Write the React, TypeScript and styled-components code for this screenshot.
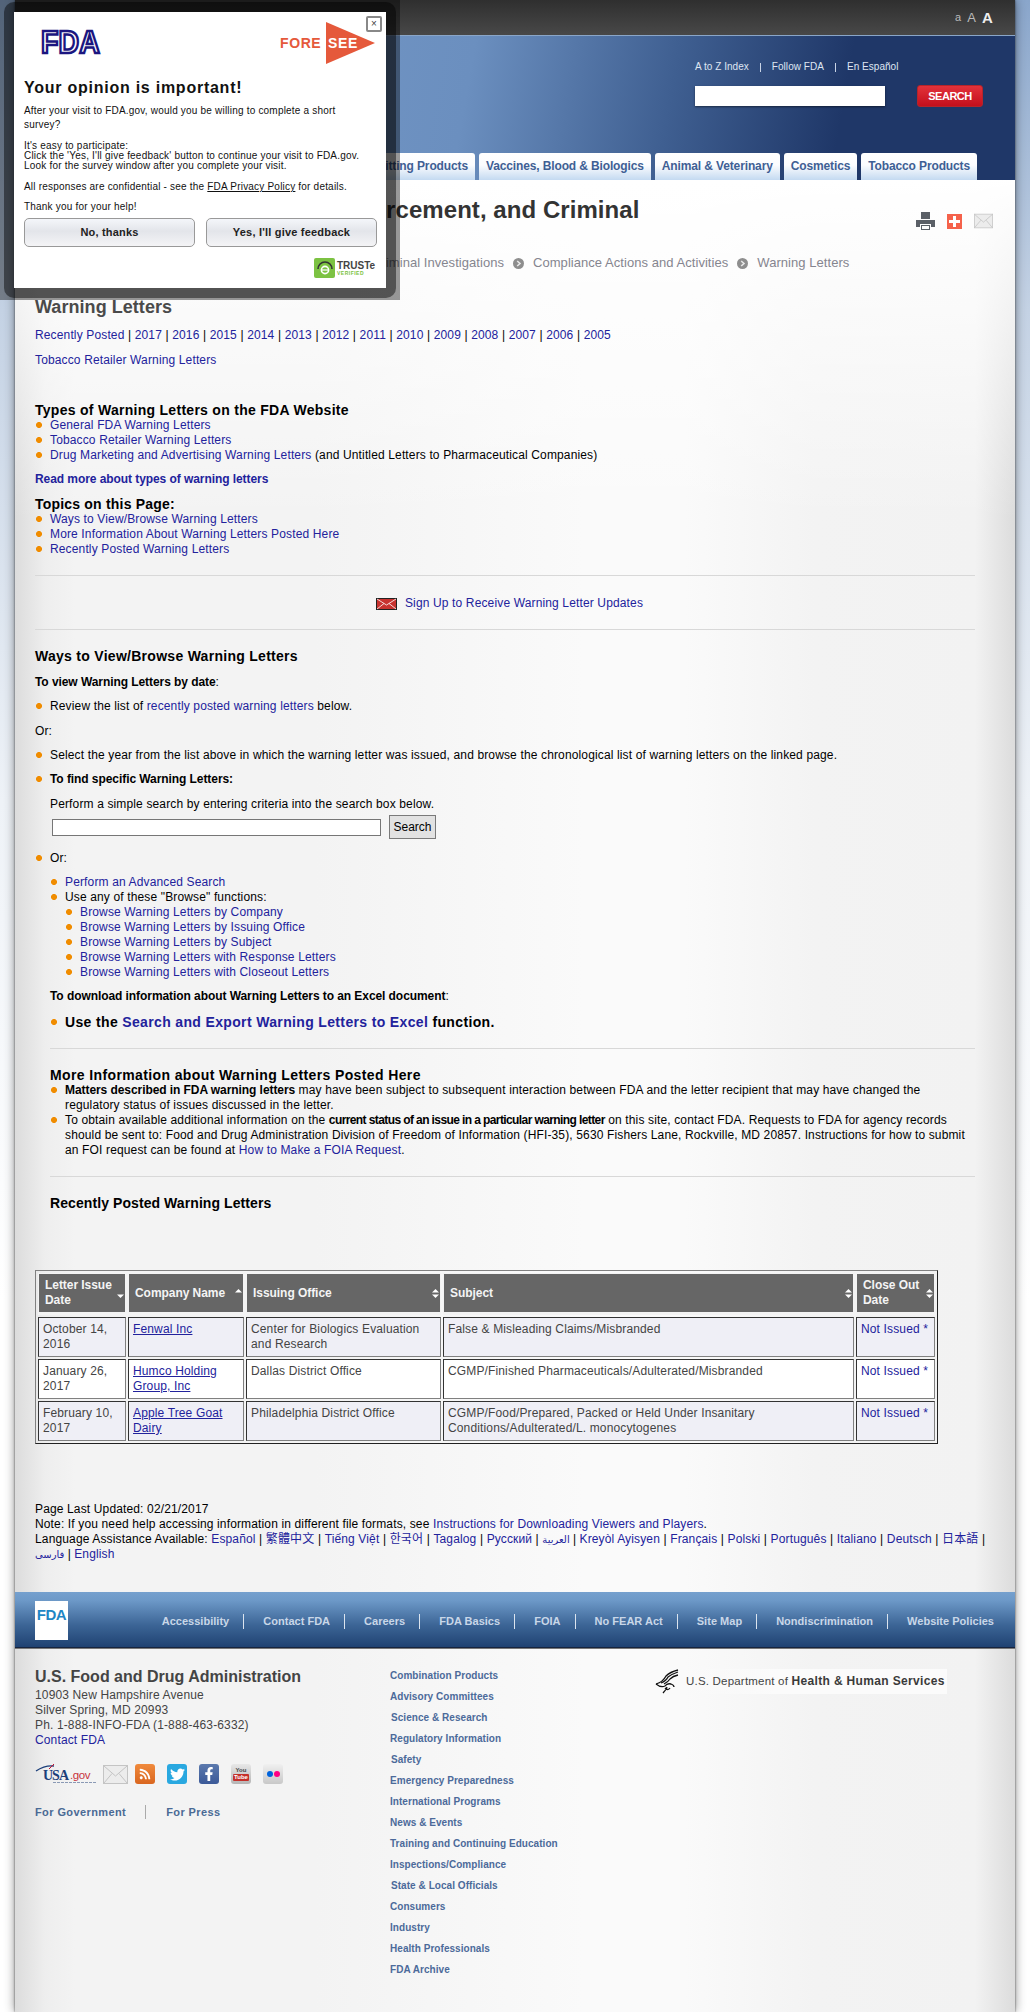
import styled, { createGlobalStyle } from 'styled-components';
import { FaTwitter, FaFacebookF, FaRss } from 'react-icons/fa';

const Global = createGlobalStyle`
  html, body { margin: 0; padding: 0; }
  body {
    font-family: "Liberation Sans", "Noto Sans CJK SC", "DejaVu Sans", sans-serif;
    font-size: 12px;
    line-height: 15px;
    letter-spacing: 0.14px;
    color: #000;
    background: linear-gradient(to bottom, #8aa6cb 0, #c4d2e4 310px, #eef2f7 800px, #fff 1300px);
    background-repeat: no-repeat;
  }
  a { color: #22229c; text-decoration: none; }
  b { letter-spacing: -0.07px; }
`;

const Panel = styled.div`
  position: relative;
  width: 1000px;
  height: 2012px;
  margin-left: 15px;
  overflow: hidden;
  box-shadow: 0 0 10px rgba(0, 0, 0, 0.45), 0 0 2px rgba(0, 0, 0, 0.6);
  background:
    linear-gradient(to bottom, #fff 180px, rgba(255, 255, 255, 0) 520px),
    linear-gradient(to right, #dcdcdc 0, #eeeeee 30px, #f3f3f3 60px, #f3f3f3 300px, #fafafa 570px, #fafafa 670px, #f3f3f3 800px, #f2f2f2 960px, #dcdcdc 1000px);
`;

const PanelClip = styled.div`
  display: flex;
  flex-direction: column;
`;

const TopBar = styled.div`
  height: 35px;
  border-bottom: 1px solid #8aa6c8;
  background: linear-gradient(to bottom, #2f2f2f, #484848);
  display: flex;
  justify-content: flex-end;
  align-items: center;
  gap: 6px;
  padding-right: 22px;
  color: #bbb;
  font-weight: normal;
`;

const SizeA = styled.span<{ $s: number; $b?: boolean }>`
  font-size: ${(p) => p.$s}px;
  font-weight: ${(p) => (p.$b ? 700 : 400)};
  color: ${(p) => (p.$b ? '#eee' : '#bbb')};
`;

const Header = styled.div`
  height: 144px;
  box-sizing: border-box;
  background: linear-gradient(100deg, #7a9dca 0, #6b8fbf 45%, #3f5f91 65%, #1f3768 82%, #1f3768 100%);
  display: flex;
  flex-direction: column;
  justify-content: space-between;
`;

const Utility = styled.div`
  align-self: flex-end;
  width: 320px;
  padding-top: 24px;
`;

const UtilLinks = styled.div`
  display: flex;
  align-items: center;
  gap: 11px;
  font-size: 10px;
  line-height: 14px;
  letter-spacing: 0.04px;
  color: #dfe6f2;
`;

const UtilSep = styled.span`
  width: 1px;
  height: 9px;
  background: #c9d4e6;
`;

const SearchRow = styled.div`
  display: flex;
  align-items: center;
  margin-top: 11px;
`;

const SearchBox = styled.div`
  width: 190px;
  height: 20px;
  background: #fff;
  box-shadow: 0 1px 2px rgba(0, 0, 0, 0.5);
`;

const SearchBtn = styled.div`
  margin-left: 32px;
  width: 66px;
  height: 22px;
  border-radius: 3px;
  background: linear-gradient(to bottom, #e2323a, #c40f1c);
  border: 1px solid #b5242a;
  box-sizing: border-box;
  color: #fff;
  font-weight: 700;
  font-size: 11px;
  line-height: 20px;
  letter-spacing: -0.5px;
  text-align: center;
`;

const Tabs = styled.div`
  display: flex;
  justify-content: flex-end;
  gap: 4px;
  padding-right: 38px;
`;

const Tab = styled.div`
  height: 27px;
  box-sizing: border-box;
  padding: 0 7px;
  border-radius: 3px 3px 0 0;
  background: linear-gradient(to bottom, #fff, #fbfcfe 45%, #c4daf1);
  color: #3f5f94;
  font-weight: 700;
  font-size: 12px;
  line-height: 27px;
  letter-spacing: -0.13px;
  white-space: nowrap;
`;

const TitleRow = styled.div`
  display: flex;
  justify-content: space-between;
  padding: 15px 22px 0 20px;
`;

const Title = styled.h1`
  margin: 0;
  width: 700px;
  font-size: 24px;
  line-height: 30px;
  font-weight: 700;
  letter-spacing: 0.06px;
  color: #333;
`;

const PageTools = styled.div`
  display: flex;
  align-items: center;
  gap: 12px;
  height: 18px;
  margin-top: 17px;
`;

const Crumbs = styled.div`
  display: flex;
  align-items: center;
  gap: 9px;
  padding-left: 36px;
  height: 16px;
  font-size: 13px;
  line-height: 16px;
  letter-spacing: 0.05px;
  color: #85858f;
  white-space: nowrap;
`;

const Content = styled.div`
  padding: 0 40px 0 20px;
`;

const PageHeading = styled.h2`
  margin: 25px 0 0;
  font-size: 18px;
  line-height: 22px;
  font-weight: 700;
  letter-spacing: 0.05px;
  color: #4a4a4a;
`;

const Para = styled.p<{ $mt?: number; $in?: number; $b?: boolean }>`
  margin: ${(p) => p.$mt ?? 9}px 0 0 ${(p) => p.$in ?? 0}px;
  font-weight: ${(p) => (p.$b ? 700 : 400)};
  ${(p) => p.$b && 'letter-spacing: -0.07px;'}
`;

const SubHead = styled.h3<{ $mt?: number; $in?: number; $ls?: number }>`
  margin: ${(p) => p.$mt ?? 9}px 0 0 ${(p) => p.$in ?? 0}px;
  font-size: 14px;
  line-height: 16px;
  font-weight: 700;
  letter-spacing: ${(p) => p.$ls ?? 0.28}px;
  color: #000;
`;

const BulletList = styled.ul<{ $mt?: number; $in?: number }>`
  list-style: none;
  margin: ${(p) => p.$mt ?? 0}px 0 0 ${(p) => p.$in ?? 0}px;
  padding: 0;
`;

const Bullet = styled.li<{ $mt?: number; $big?: boolean }>`
  margin-top: ${(p) => p.$mt ?? 0}px;
  padding-left: 15px;
  background: radial-gradient(circle at 3px 3px, #f08c00 2.6px, rgba(240, 140, 0, 0) 3.4px) no-repeat 1px ${(p) => (p.$big ? 5 : 4)}px;
  background-size: 7px 7px;
  ${(p) => p.$big && 'font-size: 14px; line-height: 16px; font-weight: 700; letter-spacing: 0.35px;'}
`;

const TightBold = styled.b`
  letter-spacing: -0.6px;
`;

const Rule = styled.hr<{ $in?: number }>`
  border: 0;
  height: 1px;
  background: #d8d8d8;
  margin: 18px 0 0 ${(p) => p.$in ?? 0}px;
`;

const SignUp = styled.div`
  display: flex;
  justify-content: center;
  align-items: center;
  gap: 8px;
  margin-top: 20px;
  padding-left: 9px;
`;

const SearchForm = styled.form`
  display: flex;
  align-items: center;
  gap: 8px;
  margin: 3px 0 0 2px;
`;

const TextBox = styled.div`
  width: 327px;
  height: 15px;
  background: #fff;
  border: 1px solid #767676;
`;

const FormBtn = styled.button`
  width: 47px;
  height: 24px;
  padding: 0;
  background: #e2e2e2;
  border: 1px solid #7a7a7a;
  font: inherit;
  color: #000;
`;

const Table = styled.table`
  margin-top: 59px;
  width: 903px;
  table-layout: fixed;
  border-collapse: separate;
  border-spacing: 2px;
  border: 1px solid;
  border-color: #808080 #222 #222 #808080;
  color: #444;
`;

const Th = styled.th<{ $w: number }>`
  width: ${(p) => p.$w - 2}px;
  padding: 0;
  background: #666;
  border: 1px solid #f3f3f3;
  border-bottom-width: 3px;
  color: #f4f4f4;
  font-weight: 700;
  letter-spacing: -0.05px;
  text-align: left;
`;

const HeadInner = styled.div`
  display: flex;
  justify-content: space-between;
  align-items: center;
  height: 38px;
  padding: 0 1px 0 6px;
`;

const Td = styled.td<{ $even?: boolean }>`
  height: 30px;
  padding: 4px;
  vertical-align: top;
  background: ${(p) => (p.$even ? '#fff' : '#efeff6')};
  border: 1px solid;
  border-color: #333 #808080 #808080 #333;
`;

const TableLink = styled.a`
  text-decoration: underline;
`;

const Updated = styled.div`
  margin-top: 58px;
  width: 965px;
`;

const ArabicText = styled.a`
  font-size: 10px;
`;

const FootBand = styled.div`
  margin-top: 30px;
  height: 56px;
  border-bottom: 1px solid #16243f;
  box-shadow: 0 1px 0 #777;
  background: linear-gradient(to bottom, #75a0ce 0, #6d99c8 15%, #3c6596 60%, #1f4272 100%);
  display: flex;
  justify-content: space-between;
  padding: 9px 21px 0 20px;
  box-sizing: border-box;
`;

const FootLogo = styled.div`
  width: 33px;
  height: 39px;
  background: #fff;
  display: flex;
  justify-content: center;
  color: #1f86c5;
  font-weight: 700;
  font-size: 15px;
  line-height: 28px;
  letter-spacing: -0.5px;
`;

const FootNav = styled.div`
  display: flex;
  align-items: center;
  height: 15px;
  margin-top: 13px;
`;

const FootNavLink = styled.a`
  padding: 0 14px 0 19px;
  border-right: 1px solid #dbe4ef;
  color: #c9d7e8;
  font-size: 11px;
  font-weight: 700;
  line-height: 15px;
  letter-spacing: 0.02px;
  white-space: nowrap;
  &:last-child { border-right: 0; padding-right: 0; }
`;

const FootBody = styled.div`
  display: flex;
  padding: 19px 0 0 20px;
`;

const FootLeft = styled.div`
  width: 355px;
  color: #444;
`;

const OrgName = styled.div`
  font-size: 16px;
  line-height: 20px;
  font-weight: 700;
  letter-spacing: 0;
  color: #444;
  margin-bottom: 1px;
`;

const Socials = styled.div`
  display: flex;
  align-items: center;
  height: 22px;
  margin-top: 15px;
`;

const SocialBox = styled.div<{ $bg: string; $ml: number }>`
  width: 20px;
  height: 20px;
  margin-left: ${(p) => p.$ml}px;
  border-radius: 3px;
  background: ${(p) => p.$bg};
  display: flex;
  flex-direction: column;
  align-items: center;
  justify-content: center;
  color: #fff;
  font-size: 14px;
`;

const TubeTop = styled.span`
  font-size: 6px;
  line-height: 7px;
  font-weight: 700;
  letter-spacing: 0;
  color: #444;
`;

const TubeLow = styled.span`
  font-size: 6px;
  line-height: 7px;
  font-weight: 700;
  letter-spacing: 0;
  color: #fff;
  background: #c4302b;
  border-radius: 1px;
  padding: 0 1px;
`;

const FlickrDot = styled.span<{ $c: string }>`
  width: 6px;
  height: 6px;
  border-radius: 50%;
  background: ${(p) => p.$c};
`;

const FlickrRow = styled.div`
  display: flex;
  gap: 1px;
`;

const ForLinks = styled.div`
  display: flex;
  align-items: center;
  margin-top: 20px;
`;

const ForLink = styled.a`
  color: #4a6a95;
  font-size: 11px;
  line-height: 14px;
  font-weight: 700;
  letter-spacing: 0.4px;
`;

const ForSep = styled.span`
  width: 1px;
  height: 14px;
  background: #aaa;
  margin: 0 20px 0 19px;
`;

const FootMid = styled.div`
  width: 265px;
  margin-top: 1px;
`;

const MidLink = styled.div<{ $off?: boolean }>`
  height: 21px;
  padding-left: ${(p) => (p.$off ? 1 : 0)}px;
  color: #4c6a9a;
  font-size: 10px;
  line-height: 16px;
  font-weight: 700;
  letter-spacing: 0.05px;
`;

const Hhs = styled.div`
  height: 25px;
  width: 292px;
  display: flex;
  align-items: center;
  gap: 7px;
  margin-top: 2px;
  background: linear-gradient(to right, rgba(255, 255, 255, 0) 30px, #fbfbfb 120px);
  font-size: 11.5px;
  letter-spacing: 0.2px;
  color: #444;
  white-space: nowrap;
`;

const HhsBold = styled.b`
  font-size: 12px;
  letter-spacing: 0.35px;
  color: #3a3a3a;
`;

const Overlay = styled.div`
  position: absolute;
  top: 0;
  left: 0;
  width: 400px;
  height: 300px;
  background: rgba(0, 0, 0, 0.4);
`;

const ModalFrame = styled.div`
  position: absolute;
  top: 2px;
  left: 4px;
  width: 392px;
  height: 296px;
  box-sizing: border-box;
  padding: 10px;
  border-radius: 10px;
  background: rgba(0, 0, 0, 0.45);
`;

const ModalBody = styled.div`
  position: relative;
  height: 276px;
  box-sizing: border-box;
  padding: 0 10px;
  background: #fff;
  font-size: 10px;
  line-height: 11px;
  letter-spacing: 0.2px;
  color: #111;
`;

const ModalLogos = styled.div`
  display: flex;
  justify-content: space-between;
  align-items: flex-start;
  box-sizing: border-box;
  height: 67px;
  padding: 10px 1px 0 16px;
`;

const CloseBtn = styled.div`
  position: absolute;
  top: 4px;
  right: 4px;
  width: 12px;
  height: 12px;
  border: 2px solid #888;
  border-radius: 2px;
  background: #fff;
  color: #444;
  font-size: 10px;
  line-height: 11px;
  letter-spacing: 0;
  text-align: center;
`;

const ModalTitle = styled.div`
  margin: 0;
  height: 18px;
  font-size: 16px;
  line-height: 18px;
  font-weight: 700;
  letter-spacing: 0.75px;
  color: #111;
`;

const ModalText = styled.div<{ $mt: number; $lh?: number; $w?: number }>`
  margin-top: ${(p) => p.$mt}px;
  line-height: ${(p) => p.$lh ?? 10}px;
  ${(p) => p.$w && `width: ${p.$w}px;`}
`;

const ModalBtns = styled.div`
  display: flex;
  justify-content: space-between;
  margin: 6px -1px 0 0;
`;

const ModalBtn = styled.div`
  width: 171px;
  height: 29px;
  box-sizing: border-box;
  border: 1px solid #999;
  border-radius: 5px;
  background: linear-gradient(to bottom, #f4f6fa, #e3e5ea 45%, #f4f4f6);
  text-align: center;
  font-size: 11px;
  font-weight: 700;
  line-height: 26px;
  letter-spacing: 0.2px;
  color: #222;
`;

const Truste = styled.div`
  display: flex;
  justify-content: flex-end;
  align-items: center;
  gap: 2px;
  margin-top: 11px;
`;

const TrusteBadge = styled.div`
  width: 21px;
  height: 20px;
  background: #7cc242;
  border-radius: 2px;
  display: flex;
  align-items: center;
  justify-content: center;
`;

const TrusteText = styled.div`
  font-size: 10px;
  line-height: 9px;
  font-weight: 700;
  letter-spacing: 0;
  color: #444;
  width: 39px;
`;

const TrusteSub = styled.div`
  font-size: 5px;
  line-height: 6px;
  color: #7cc242;
  letter-spacing: 0.5px;
`;

const tabs = [
  'Home', 'Food', 'Drugs', 'Medical Devices', 'Radiation-Emitting Products',
  'Vaccines, Blood & Biologics', 'Animal & Veterinary', 'Cosmetics', 'Tobacco Products',
];
const years = ['2017', '2016', '2015', '2014', '2013', '2012', '2011', '2010', '2009', '2008', '2007', '2006', '2005'];
const footNav = ['Accessibility', 'Contact FDA', 'Careers', 'FDA Basics', 'FOIA', 'No FEAR Act', 'Site Map', 'Nondiscrimination', 'Website Policies'];
const midLinks: [string, boolean?][] = [
  ['Combination Products'], ['Advisory Committees'], ['Science & Research', true], ['Regulatory Information'],
  ['Safety', true], ['Emergency Preparedness'], ['International Programs'], ['News & Events'],
  ['Training and Continuing Education'], ['Inspections/Compliance'], ['State & Local Officials', true],
  ['Consumers'], ['Industry'], ['Health Professionals'], ['FDA Archive'],
];
const languagesA = ['Español', '繁體中文', 'Tiếng Việt', '한국어', 'Tagalog', 'Русский'];
const languagesB = ['Kreyòl Ayisyen', 'Français', 'Polski', 'Português', 'Italiano', 'Deutsch', '日本語'];
const rows = [
  { date: 'October 14, 2016', company: 'Fenwal Inc', office: 'Center for Biologics Evaluation and Research', subject: 'False & Misleading Claims/Misbranded' },
  { date: 'January 26, 2017', company: 'Humco Holding Group, Inc', office: 'Dallas District Office', subject: 'CGMP/Finished Pharmaceuticals/Adulterated/Misbranded' },
  { date: 'February 10, 2017', company: 'Apple Tree Goat Dairy', office: 'Philadelphia District Office', subject: 'CGMP/Food/Prepared, Packed or Held Under Insanitary Conditions/Adulterated/L. monocytogenes' },
];

function CrumbDot() {
  return (
    <svg width="11" height="11" viewBox="0 0 11 11" style={{ flexShrink: 0 }}>
      <circle cx="5.5" cy="5.5" r="5.5" fill="#8e8e8e" />
      <path d="M4.2 3 L7 5.5 L4.2 8" fill="none" stroke="#e8e8e8" strokeWidth="1.6" />
    </svg>
  );
}

function Envelope({ w, h }: { w: number; h: number }) {
  return (
    <svg width={w} height={h} viewBox="0 0 25 19">
      <rect x="0.5" y="0.5" width="24" height="18" fill="#ececec" stroke="#c4c4c4" />
      <path d="M1 1 L12.5 11 L24 1 M1 18 L9 8.5 M24 18 L16 8.5" fill="none" stroke="#c4c4c4" />
    </svg>
  );
}

function SortArrow({ dir }: { dir: 'both' | 'up' | 'down' }) {
  return (
    <svg width="7" height="9" viewBox="0 0 7 9" style={{ flexShrink: 0 }}>
      {dir !== 'down' && <path d="M3.5 0 L7 3.6 L0 3.6 Z" fill="#fff" />}
      {dir !== 'up' && <path d="M0 5.4 L7 5.4 L3.5 9 Z" fill="#fff" />}
    </svg>
  );
}

function FdaMark() {
  return (
    <svg width="66" height="42" viewBox="0 0 66 42">
      <text x="1" y="31" fontFamily="Liberation Sans" fontWeight="700" fontSize="32" textLength="59" lengthAdjust="spacingAndGlyphs" fill="#fff" stroke="#1b1680" strokeWidth="2.6">FDA</text>
    </svg>
  );
}

function ForeseeMark() {
  return (
    <svg width="95" height="42" viewBox="0 0 95 42">
      <polygon points="46,0 95,21 46,42" fill="#e5593b" />
      <text x="0" y="26" fontFamily="Liberation Sans" fontWeight="700" fontSize="14" letterSpacing="0.6" fill="#e5593b">FORE</text>
      <text x="48" y="26" fontFamily="Liberation Sans" fontWeight="700" fontSize="14" letterSpacing="0.6" fill="#fff">SEE</text>
    </svg>
  );
}

function UsaGov() {
  return (
    <svg width="68" height="20" viewBox="0 0 68 20">
      <path d="M1 7 Q10 1 19 2" fill="none" stroke="#1c3f7a" strokeWidth="1.3" />
      <path d="M14 5 L19 0" stroke="#c8102e" strokeWidth="1" />
      <text x="8" y="16" fontFamily="Liberation Serif" fontWeight="700" fontSize="14" letterSpacing="-1" fill="#1c3f7a">USA</text>
      <text x="35" y="15" fontFamily="Liberation Sans" fontSize="11.5" letterSpacing="-0.4" fill="#c8323c">.gov</text>
      <path d="M18 18.5 H61" stroke="#8b9ab5" strokeWidth="1" strokeDasharray="3 1" />
    </svg>
  );
}

function HhsEagle() {
  return (
    <svg width="24" height="25" viewBox="0 0 24 25" style={{ flexShrink: 0 }}>
      <g fill="none" stroke="#111" strokeWidth="1.3">
        <path d="M1 15 Q8 13 11 7 Q15 3 23 1" />
        <path d="M6 14 Q11 12 13 8 Q17 5 23 3" />
        <path d="M9 15 Q13 13 15 10 Q18 7 23 6" />
        <path d="M1 15 Q6 19 10 17 Q12 14 16 15 Q19 16 19 18" />
        <path d="M8 24 Q11 21 12 18 M10 19 Q13 22 15 19" />
      </g>
    </svg>
  );
}

export default function App() {
  return (
    <>
      <Global />
      <Panel>
        <PanelClip>
          <TopBar>
            <SizeA $s={11}>a</SizeA>
            <SizeA $s={13}>A</SizeA>
            <SizeA $s={15} $b>A</SizeA>
          </TopBar>
          <Header>
            <Utility>
              <UtilLinks>
                <span>A to Z Index</span><UtilSep />
                <span>Follow FDA</span><UtilSep />
                <span>En Español</span>
              </UtilLinks>
              <SearchRow>
                <SearchBox />
                <SearchBtn>SEARCH</SearchBtn>
              </SearchRow>
            </Utility>
            <Tabs>
              {tabs.map((t) => <Tab key={t}>{t}</Tab>)}
            </Tabs>
          </Header>

          <TitleRow>
            <Title>Inspections, Compliance, Enforcement, and Criminal Investigations</Title>
            <PageTools>
              <svg width="19" height="18" viewBox="0 0 19 18">
                <path d="M5 0 H14 V7 H5 Z" fill="#5a5f66" />
                <path d="M0 8 H19 V15 H15 V12 H4 V15 H0 Z" fill="#5a5f66" />
                <path d="M5 13 H14 V18 H5 Z M6 14 V17 H13 V14 Z" fill="#5a5f66" fillRule="evenodd" />
              </svg>
              <svg width="15" height="15" viewBox="0 0 15 15">
                <rect width="15" height="15" fill="#f5624b" />
                <path d="M6 2 H9 V6 H13 V9 H9 V13 H6 V9 H2 V6 H6 Z" fill="#fff" />
              </svg>
              <Envelope w={19} h={18} />
            </PageTools>
          </TitleRow>
          <Crumbs>
            <span>Home</span><CrumbDot />
            <span>Inspections, Compliance, Enforcement, and Criminal Investigations</span><CrumbDot />
            <span>Compliance Actions and Activities</span><CrumbDot />
            <span>Warning Letters</span>
          </Crumbs>

          <Content>
            <PageHeading>Warning Letters</PageHeading>
            <Para $mt={10}>
              <a>Recently Posted</a>
              {years.map((y) => <span key={y}> | <a>{y}</a></span>)}
            </Para>
            <Para $mt={10}><a>Tobacco Retailer Warning Letters</a></Para>

            <SubHead $mt={34}>Types of Warning Letters on the FDA Website</SubHead>
            <BulletList>
              <Bullet><a>General FDA Warning Letters</a></Bullet>
              <Bullet><a>Tobacco Retailer Warning Letters</a></Bullet>
              <Bullet><a>Drug Marketing and Advertising Warning Letters</a> (and Untitled Letters to Pharmaceutical Companies)</Bullet>
            </BulletList>
            <Para $b><a>Read more about types of warning letters</a></Para>
            <SubHead $ls={0.2}>Topics on this Page:</SubHead>
            <BulletList>
              <Bullet><a>Ways to View/Browse Warning Letters</a></Bullet>
              <Bullet><a>More Information About Warning Letters Posted Here</a></Bullet>
              <Bullet><a>Recently Posted Warning Letters</a></Bullet>
            </BulletList>
            <Rule />
            <SignUp>
              <svg width="21" height="12" viewBox="0 0 21 12">
                <rect x="0.5" y="0.5" width="20" height="11" fill="#c8322f" stroke="#222" />
                <path d="M1 1 L10.5 7 L20 1 M1 11 L8 5.5 M20 11 L13 5.5" fill="none" stroke="#fff" strokeWidth="0.8" />
              </svg>
              <a>Sign Up to Receive Warning Letter Updates</a>
            </SignUp>
            <Rule />

            <SubHead $mt={18}>Ways to View/Browse Warning Letters</SubHead>
            <Para $mt={11} $b>To view Warning Letters by date<span style={{ fontWeight: 400 }}>:</span></Para>
            <BulletList $mt={9}>
              <Bullet>Review the list of <a>recently posted warning letters</a> below.</Bullet>
            </BulletList>
            <Para $mt={10}>Or:</Para>
            <BulletList $mt={9}>
              <Bullet>Select the year from the list above in which the warning letter was issued, and browse the chronological list of warning letters on the linked page.</Bullet>
              <Bullet $mt={9}>
                <b>To find specific Warning Letters:</b>
                <Para $mt={10}>Perform a simple search by entering criteria into the search box below.</Para>
                <SearchForm>
                  <TextBox />
                  <FormBtn type="button">Search</FormBtn>
                </SearchForm>
              </Bullet>
              <Bullet $mt={12}>
                Or:
                <BulletList $mt={9}>
                  <Bullet><a>Perform an Advanced Search</a></Bullet>
                  <Bullet>
                    Use any of these "Browse" functions:
                    <BulletList>
                      <Bullet><a>Browse Warning Letters by Company</a></Bullet>
                      <Bullet><a>Browse Warning Letters by Issuing Office</a></Bullet>
                      <Bullet><a>Browse Warning Letters by Subject</a></Bullet>
                      <Bullet><a>Browse Warning Letters with Response Letters</a></Bullet>
                      <Bullet><a>Browse Warning Letters with Closeout Letters</a></Bullet>
                    </BulletList>
                  </Bullet>
                </BulletList>
              </Bullet>
            </BulletList>
            <Para $in={15} $b>To download information about Warning Letters to an Excel document<span style={{ fontWeight: 400 }}>:</span></Para>
            <BulletList $mt={10} $in={15}>
              <Bullet $big>Use the <a>Search and Export Warning Letters to Excel</a> function.</Bullet>
            </BulletList>
            <Rule $in={15} />

            <SubHead $mt={18} $in={15} $ls={0.38}>More Information about Warning Letters Posted Here</SubHead>
            <BulletList $in={15}>
              <Bullet><b>Matters described in FDA warning letters</b> may have been subject to subsequent interaction between FDA and the letter recipient that may have changed the regulatory status of issues discussed in the letter.</Bullet>
              <Bullet>To obtain available additional information on the <TightBold>current status of an issue in a particular warning letter</TightBold> on this site, contact FDA. Requests to FDA for agency records should be sent to: Food and Drug Administration Division of Freedom of Information (HFI-35), 5630 Fishers Lane, Rockville, MD 20857. Instructions for how to submit an FOI request can be found at <a>How to Make a FOIA Request</a>.</Bullet>
            </BulletList>
            <Rule $in={15} />
            <SubHead $mt={18} $in={15} $ls={0.08}>Recently Posted Warning Letters</SubHead>

            <Table>
              <thead>
                <tr>
                  <Th $w={88}><HeadInner>Letter Issue Date<SortArrow dir="down" /></HeadInner></Th>
                  <Th $w={116}><HeadInner>Company Name<SortArrow dir="up" /></HeadInner></Th>
                  <Th $w={195}><HeadInner>Issuing Office<SortArrow dir="both" /></HeadInner></Th>
                  <Th $w={411}><HeadInner>Subject<SortArrow dir="both" /></HeadInner></Th>
                  <Th $w={79}><HeadInner>Close Out Date<SortArrow dir="both" /></HeadInner></Th>
                </tr>
              </thead>
              <tbody>
                {rows.map((r, i) => (
                  <tr key={r.company}>
                    <Td $even={i === 1}>{r.date}</Td>
                    <Td $even={i === 1}><TableLink>{r.company}</TableLink></Td>
                    <Td $even={i === 1}>{r.office}</Td>
                    <Td $even={i === 1}>{r.subject}</Td>
                    <Td $even={i === 1}><a>Not Issued *</a></Td>
                  </tr>
                ))}
              </tbody>
            </Table>

            <Updated>
              Page Last Updated: 02/21/2017<br />
              Note: If you need help accessing information in different file formats, see <a>Instructions for Downloading Viewers and Players</a>.<br />
              Language Assistance Available:{' '}
              {languagesA.map((l) => <span key={l}><a>{l}</a> | </span>)}
              <ArabicText>العربية</ArabicText>{' | '}
              {languagesB.map((l) => <span key={l}><a>{l}</a> | </span>)}
              <ArabicText>فارسی</ArabicText> | <a>English</a>
            </Updated>
          </Content>

          <FootBand>
            <FootLogo>FDA</FootLogo>
            <FootNav>
              {footNav.map((n) => <FootNavLink key={n}>{n}</FootNavLink>)}
            </FootNav>
          </FootBand>

          <FootBody>
            <FootLeft>
              <OrgName>U.S. Food and Drug Administration</OrgName>
              10903 New Hampshire Avenue<br />
              Silver Spring, MD 20993<br />
              Ph. 1-888-INFO-FDA (1-888-463-6332)<br />
              <a>Contact FDA</a>
              <Socials>
                <UsaGov />
                <Envelope w={25} h={19} />
                <SocialBox $bg="linear-gradient(#f08a3c,#d9661f)" $ml={7}><FaRss size={12} /></SocialBox>
                <SocialBox $bg="#29a8e0" $ml={12}><FaTwitter size={15} /></SocialBox>
                <SocialBox $bg="linear-gradient(#5b79ad,#3b5998)" $ml={12}><FaFacebookF size={14} /></SocialBox>
                <SocialBox $bg="linear-gradient(#e8e8e8,#b5b5b5)" $ml={12}><TubeTop>You</TubeTop><TubeLow>Tube</TubeLow></SocialBox>
                <SocialBox $bg="linear-gradient(#f0f0f0,#c8c8c8)" $ml={12}>
                  <FlickrRow><FlickrDot $c="#0063dc" /><FlickrDot $c="#ff0084" /></FlickrRow>
                </SocialBox>
              </Socials>
              <ForLinks>
                <ForLink>For Government</ForLink>
                <ForSep />
                <ForLink>For Press</ForLink>
              </ForLinks>
            </FootLeft>
            <FootMid>
              {midLinks.map(([l, off]) => <MidLink key={l} $off={off}>{l}</MidLink>)}
            </FootMid>
            <Hhs>
              <HhsEagle />
              <span>U.S. Department of <HhsBold>Health &amp; Human Services</HhsBold></span>
            </Hhs>
          </FootBody>
        </PanelClip>
      </Panel>

      <Overlay />
      <ModalFrame>
        <ModalBody>
          <CloseBtn>×</CloseBtn>
          <ModalLogos>
            <FdaMark />
            <ForeseeMark />
          </ModalLogos>
          <ModalTitle>Your opinion is important!</ModalTitle>
          <ModalText $mt={7} $lh={14} $w={335}>After your visit to FDA.gov, would you be willing to complete a short survey?</ModalText>
          <ModalText $mt={9}>It's easy to participate:<br />Click the 'Yes, I'll give feedback' button to continue your visit to FDA.gov.<br />Look for the survey window after you complete your visit.</ModalText>
          <ModalText $mt={11}>All responses are confidential - see the <u>FDA Privacy Policy</u> for details.</ModalText>
          <ModalText $mt={10}>Thank you for your help!</ModalText>
          <ModalBtns>
            <ModalBtn>No, thanks</ModalBtn>
            <ModalBtn>Yes, I'll give feedback</ModalBtn>
          </ModalBtns>
          <Truste>
            <TrusteBadge>
              <svg width="16" height="16" viewBox="0 0 16 16">
                <path d="M1 9 A7 7 0 0 1 15 9" fill="none" stroke="#333" strokeWidth="1.6" />
                <circle cx="8" cy="10" r="3.6" fill="none" stroke="#fff" strokeWidth="1.6" />
                <path d="M4.5 10 H11.5" stroke="#fff" strokeWidth="1.2" />
              </svg>
            </TrusteBadge>
            <TrusteText>TRUSTe<TrusteSub>VERIFIED</TrusteSub></TrusteText>
          </Truste>
        </ModalBody>
      </ModalFrame>
    </>
  );
}
